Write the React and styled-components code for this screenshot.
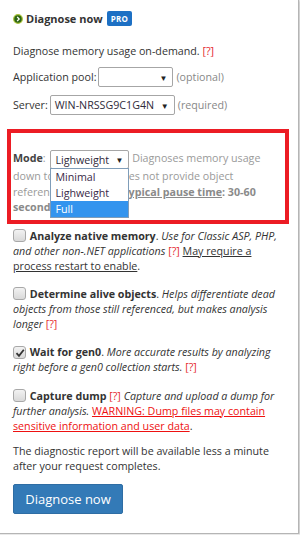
import styled, { createGlobalStyle } from "styled-components";

const Global = createGlobalStyle`
  html, body {
    margin: 0;
    padding: 0;
    background: #e9e9e9;
  }
  body {
    font-family: "Open Sans", "Liberation Sans", sans-serif;
    font-size: 10.7px;
    color: #333;
  }
`;

const Panel = styled.div`
  width: 270px;
  height: 513px;
  padding: 8px 15px 12px 13px;
  background: #fff;
  border-right: 1px solid #b5b5b5;
  border-bottom: 1px solid #b5b5b5;
  box-shadow: 1px 1px 2px rgba(0, 0, 0, 0.15);
`;

const Header = styled.div`
  display: flex;
  align-items: center;
  height: 21px;
  font-size: 11px;
  font-weight: 700;
  color: #333;
`;

const HeaderIcon = styled.svg`
  width: 10px;
  height: 10px;
  margin-right: 3px;
`;

const Pro = styled.span`
  margin-left: 4px;
  background: #1d70c4;
  color: #fff;
  font-size: 8px;
  font-weight: 700;
  letter-spacing: 0.3px;
  padding: 2px 4px;
  border-radius: 2px;
  line-height: 11px;
`;

const Para = styled.p`
  margin: ${(p) => p.$mt || 0}px 0 0;
  line-height: 15px;
`;

const Help = styled.span`
  color: #e5282e;
`;

const Row = styled.div`
  display: flex;
  align-items: center;
  height: 22px;
  margin-top: ${(p) => p.$mt || 0}px;
`;

const Hint = styled.span`
  color: #888;
  margin-left: 3px;
`;

const Select = styled.span`
  position: relative;
  display: inline-flex;
  align-items: center;
  justify-content: space-between;
  box-sizing: border-box;
  width: ${(p) => p.$w}px;
  height: ${(p) => p.$h || 20}px;
  padding: 0 5px 0 4px;
  margin-left: 2px;
  background: #fff;
  border: 1px solid #a6a6a6;
  border-radius: 2px;
  color: #2f2a3a;
  font-size: 10.7px;
  white-space: nowrap;
  vertical-align: middle;
  line-height: normal;
`;

const Arrow = styled.span`
  font-size: 8px;
  color: #222;
`;

const RedBox = styled.div`
  margin: 13px -6px 0 -6px;
  border: 4px solid #ec1c24;
  padding: 17px 0 4px 2px;
  line-height: 15.5px;
  color: #9a9a9a;
`;

const ModeLabel = styled.b`
  color: #444;
`;

const Menu = styled.span`
  position: absolute;
  top: 100%;
  left: -1px;
  right: -1px;
  z-index: 2;
  display: flex;
  flex-direction: column;
  background: #fff;
  border: 1px solid #7f9db9;
  box-sizing: border-box;
`;

const Option = styled.span`
  height: 16px;
  line-height: 16px;
  padding-left: 4px;
  font-size: 10.7px;
  color: ${(p) => (p.$active ? "#fff" : "#3a2a48")};
  background: ${(p) => (p.$active ? "#3394ee" : "transparent")};
`;

const Strong = styled.b`
  text-decoration: ${(p) => (p.$u ? "underline" : "none")};
  color: #8a8a8a;
`;

const Item = styled.p`
  margin: ${(p) => p.$mt || 0}px 0 0;
  line-height: 15px;
`;

const Check = styled.span`
  display: inline-flex;
  align-items: center;
  justify-content: center;
  box-sizing: border-box;
  width: 13px;
  height: 13px;
  margin-right: 1px;
  vertical-align: -2px;
  border: 1px solid #a8a8a8;
  border-radius: 3px;
  background: linear-gradient(#f2f2f2, #d9d9d9);
`;

const Label = styled.b`
  color: #333;
`;

const Desc = styled.i``;

const Under = styled.span`
  text-decoration: underline;
  color: ${(p) => (p.$red ? "#ee1111" : "#333")};
`;

const Button = styled.button`
  margin-top: 10px;
  width: 110px;
  height: 30px;
  background: #337ab7;
  border: 1px solid #2e6da4;
  border-radius: 2px;
  color: #fff;
  font-family: "Open Sans", "Liberation Sans", sans-serif;
  font-size: 13px;
  padding: 0;
`;

function CheckBox({ checked }) {
  return (
    <Check>
      {checked && (
        <svg width="10" height="10" viewBox="0 0 10 10">
          <path d="M1.5 5.2 L4 7.8 L8.8 1.8" fill="none" stroke="#333" strokeWidth="1.8" />
        </svg>
      )}
    </Check>
  );
}

export default function App() {
  return (
    <>
      <Global />
      <Panel>
        <Header>
          <HeaderIcon viewBox="0 0 12 12">
            <circle cx="6" cy="6" r="5.2" fill="#2d6513" stroke="#a9c33a" strokeWidth="1.4" />
            <path d="M5 3.4 L7.4 6 L5 8.6" fill="none" stroke="#fff" strokeWidth="1.6" />
          </HeaderIcon>
          Diagnose now
          <Pro>PRO</Pro>
        </Header>

        <Para $mt={15}>
          Diagnose memory usage on-demand. <Help>[?]</Help>
        </Para>

        <Row $mt={7}>
          Application pool:
          <Select $w={75}>
            <span />
            <Arrow>▼</Arrow>
          </Select>
          <Hint>(optional)</Hint>
        </Row>
        <Row $mt={6}>
          Server:
          <Select $w={125}>
            <span>WIN-NRSSG9C1G4N</span>
            <Arrow>▼</Arrow>
          </Select>
          <Hint>(required)</Hint>
        </Row>

        <RedBox>
          <ModeLabel>Mode</ModeLabel>:{" "}
          <Select $w={79} $h={19}>
            <span>Lighweight</span>
            <Arrow>▼</Arrow>
            <Menu>
              <Option>Minimal</Option>
              <Option>Lighweight</Option>
              <Option $active>Full</Option>
            </Menu>
          </Select>{" "}
          Diagnoses memory usage down to type levels. Does not provide object references and
          roots.{" "}
          <Strong $u>Typical pause time</Strong>
          <Strong>: 30-60 seconds</Strong>
        </RedBox>

        <Item $mt={5}>
          <CheckBox /> <Label>Analyze native memory</Label>.{" "}
          <Desc>Use for Classic ASP, PHP, and other non-.NET applications</Desc>{" "}
          <Help>[?]</Help> <Under>May require a process restart to enable</Under>.
        </Item>
        <Item $mt={13}>
          <CheckBox /> <Label>Determine alive objects</Label>.{" "}
          <Desc>
            Helps differentiate dead objects from those still referenced, but makes analysis
            longer
          </Desc>{" "}
          <Help>[?]</Help>
        </Item>
        <Item $mt={13}>
          <CheckBox checked /> <Label>Wait for gen0</Label>.{" "}
          <Desc>More accurate results by analyzing right before a gen0 collection starts.</Desc>{" "}
          <Help>[?]</Help>
        </Item>
        <Item $mt={14}>
          <CheckBox /> <Label>Capture dump</Label> <Help>[?]</Help>{" "}
          <Desc>Capture and upload a dump for further analysis.</Desc>{" "}
          <Under $red>WARNING: Dump files may contain sensitive information and user data</Under>.
        </Item>

        <Para $mt={10}>
          The diagnostic report will be available less a minute after your request completes.
        </Para>

        <Button>Diagnose now</Button>
      </Panel>
    </>
  );
}
